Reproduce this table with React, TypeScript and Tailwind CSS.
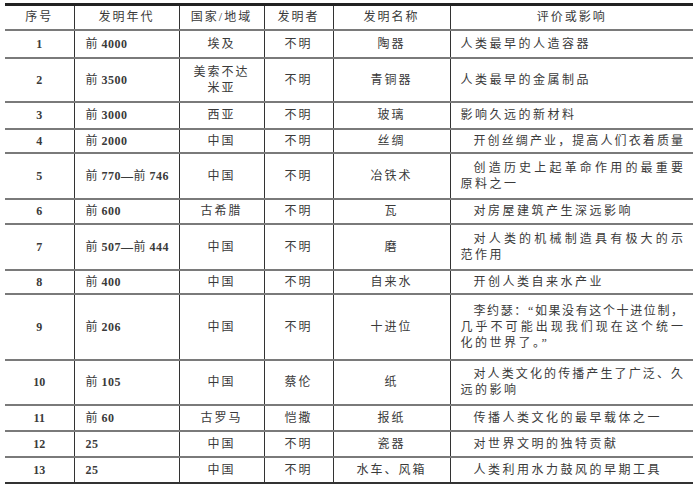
type Row = {
  no: string;
  year: string;
  place: string[];
  who: string;
  name: string;
  lines: string[];
  indent: boolean;
  h: string;
};

const rows: Row[] = [
  { no: "1", year: "前 4000", place: ["埃及"], who: "不明", name: "陶器", lines: ["人类最早的人造容器"], indent: false, h: "h-[28px]" },
  { no: "2", year: "前 3500", place: ["美索不达", "米亚"], who: "不明", name: "青铜器", lines: ["人类最早的金属制品"], indent: false, h: "h-[44px]" },
  { no: "3", year: "前 3000", place: ["西亚"], who: "不明", name: "玻璃", lines: ["影响久远的新材料"], indent: false, h: "h-[27px]" },
  { no: "4", year: "前 2000", place: ["中国"], who: "不明", name: "丝绸", lines: ["开创丝绸产业，提高人们衣着质量", ""], indent: true, h: "h-[24px]" },
  { no: "5", year: "前 770—前 746", place: ["中国"], who: "不明", name: "冶铁术", lines: ["创造历史上起革命作用的最重要", "原料之一"], indent: true, h: "h-[46px]" },
  { no: "6", year: "前 600", place: ["古希腊"], who: "不明", name: "瓦", lines: ["对房屋建筑产生深远影响"], indent: true, h: "h-[25px]" },
  { no: "7", year: "前 507—前 444", place: ["中国"], who: "不明", name: "磨", lines: ["对人类的机械制造具有极大的示", "范作用"], indent: true, h: "h-[46px]" },
  { no: "8", year: "前 400", place: ["中国"], who: "不明", name: "自来水", lines: ["开创人类自来水产业"], indent: true, h: "h-[24px]" },
  { no: "9", year: "前 206", place: ["中国"], who: "不明", name: "十进位", lines: ["李约瑟：“如果没有这个十进位制，", "几乎不可能出现我们现在这个统一", "化的世界了。”"], indent: true, h: "h-[66px]" },
  { no: "10", year: "前 105", place: ["中国"], who: "蔡伦", name: "纸", lines: ["对人类文化的传播产生了广泛、久", "远的影响"], indent: true, h: "h-[45px]" },
  { no: "11", year: "前 60", place: ["古罗马"], who: "恺撒", name: "报纸", lines: ["传播人类文化的最早载体之一"], indent: true, h: "h-[26px]" },
  { no: "12", year: "25", place: ["中国"], who: "不明", name: "瓷器", lines: ["对世界文明的独特贡献"], indent: true, h: "h-[26px]" },
  { no: "13", year: "25", place: ["中国"], who: "不明", name: "水车、风箱", lines: ["人类利用水力鼓风的早期工具"], indent: true, h: "h-[26px]" },
];

const headers = ["序号", "发明年代", "国家/地域", "发明者", "发明名称", "评价或影响"];

// "前 770—前 746": keep 前 light, numbers bold like the print
function Year({ text }: { text: string }) {
  const parts = text.split(/(前)/).filter((p) => p !== "");
  return (
    <>
      {parts.map((p, i) =>
        p === "前" ? (
          <span key={i} className="font-normal">
            {p}
          </span>
        ) : (
          <span key={i} className="font-bold">
            {p}
          </span>
        )
      )}
    </>
  );
}

function Effect({ lines, indent }: { lines: string[]; indent: boolean }) {
  const text = lines.filter((l) => l !== "");
  const fullLast = lines[lines.length - 1] === "";
  return (
    <div className="px-[10px]">
      {text.map((line, i) => {
        const full = i < text.length - 1 || fullLast;
        return (
          <div
            key={i}
            className={
              (i === 0 && indent ? "pl-[13px] " : "") +
              (full
                ? "text-justify [text-align-last:justify] tracking-normal"
                : "text-left tracking-[2.5px]")
            }
          >
            {line}
          </div>
        );
      })}
    </div>
  );
}

export default function App() {
  return (
    <main className="min-h-[484px] w-[700px] bg-white pl-[5px] pt-[3px] font-['Liberation_Serif','Noto_Sans_CJK_SC',serif] text-[12px] leading-[16px] text-[#3a3a3a]">
      <table className="w-[688px] table-fixed border-collapse">
        <colgroup>
          <col className="w-[69px]" />
          <col className="w-[105px]" />
          <col className="w-[85px]" />
          <col className="w-[69px]" />
          <col className="w-[117px]" />
          <col />
        </colgroup>
        <thead>
          <tr className="h-[25px] border-t-[3px] border-b-2 border-t-[#222] border-b-[#7a7a7a]">
            {headers.map((h, i) => (
              <th
                key={h}
                className={
                  "p-0 text-center align-middle font-normal tracking-[2px] " +
                  (i < 5 ? "border-r border-r-[#333]" : "")
                }
              >
                {h}
              </th>
            ))}
          </tr>
        </thead>
        <tbody>
          {rows.map((r, idx) => (
            <tr
              key={r.no}
              className={
                r.h +
                " border-b-2 " +
                (idx === rows.length - 1 ? "border-b-[#333]" : "border-b-[#7a7a7a]")
              }
            >
              <td className="border-r border-r-[#333] p-0 text-center align-middle font-bold">{r.no}</td>
              <td className="border-r border-r-[#333] py-0 pl-[11px] pr-0 text-left align-middle tracking-[0.5px]">
                <Year text={r.year} />
              </td>
              <td className="border-r border-r-[#333] p-0 text-center align-middle tracking-[2px]">
                {r.place.map((p) => (
                  <div key={p}>{p}</div>
                ))}
              </td>
              <td className="border-r border-r-[#333] p-0 text-center align-middle tracking-[2px]">{r.who}</td>
              <td className="border-r border-r-[#333] p-0 text-center align-middle tracking-[2px]">{r.name}</td>
              <td className="p-0 align-middle">
                <Effect lines={r.lines} indent={r.indent} />
              </td>
            </tr>
          ))}
        </tbody>
      </table>
    </main>
  );
}
